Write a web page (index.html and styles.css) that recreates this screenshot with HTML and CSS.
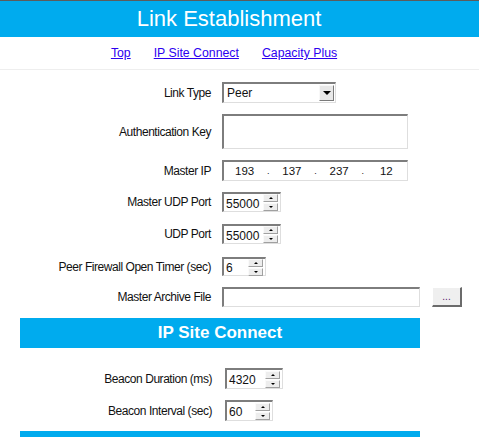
FILE: index.html
```html
<!DOCTYPE html>
<html lang="en">
<head>
    <meta charset="UTF-8">
    <title>Link Establishment</title>
    <link rel="stylesheet" href="styles.css">
</head>
<body>
    <div class="page-title">Link Establishment</div>

    <div class="nav-links">
        <a href="#top">Top</a>
        <a href="#ipsc">IP Site Connect</a>
        <a href="#cap">Capacity Plus</a>
    </div>

    <div class="form">
        <div class="row">
            <label class="lbl">Link Type</label>
            <div class="field select-box">
                <span class="select-text">Peer</span>
                <span class="drop-btn"><span class="tri-down"></span></span>
            </div>
        </div>
        <div class="row">
            <label class="lbl">Authentication Key</label>
            <div class="field auth-box"></div>
        </div>
        <div class="row">
            <label class="lbl">Master IP</label>
            <div class="field ip-box">
                <span class="octet">193</span><span class="dot">.</span>
                <span class="octet">137</span><span class="dot">.</span>
                <span class="octet">237</span><span class="dot">.</span>
                <span class="octet">12</span>
            </div>
        </div>
        <div class="row">
            <label class="lbl">Master UDP Port</label>
            <div class="field spin w59">
                <span class="spin-val">55000</span>
                <span class="spin-btns"><span class="sbtn"><span class="tri-up"></span></span><span class="sbtn"><span class="tri-dn"></span></span></span>
            </div>
        </div>
        <div class="row push1">
            <label class="lbl">UDP Port</label>
            <div class="field spin w59">
                <span class="spin-val">55000</span>
                <span class="spin-btns"><span class="sbtn"><span class="tri-up"></span></span><span class="sbtn"><span class="tri-dn"></span></span></span>
            </div>
        </div>
        <div class="row push2">
            <label class="lbl">Peer Firewall Open Timer (sec)</label>
            <div class="field spin w44 short">
                <span class="spin-val">6</span>
                <span class="spin-btns"><span class="sbtn"><span class="tri-up"></span></span><span class="sbtn"><span class="tri-dn"></span></span></span>
            </div>
        </div>
        <div class="row">
            <label class="lbl">Master Archive File</label>
            <div class="field file-box"></div>
            <button class="browse-btn">...</button>
        </div>
    </div>

    <div class="section-head" id="ipsc">IP Site Connect</div>

    <div class="form form-isc">
        <div class="row">
            <label class="lbl">Beacon Duration (ms)</label>
            <div class="field spin w58 tall">
                <span class="spin-val">4320</span>
                <span class="spin-btns"><span class="sbtn"><span class="tri-up"></span></span><span class="sbtn"><span class="tri-dn"></span></span></span>
            </div>
        </div>
        <div class="row">
            <label class="lbl">Beacon Interval (sec)</label>
            <div class="field spin w48 tall">
                <span class="spin-val">60</span>
                <span class="spin-btns"><span class="sbtn"><span class="tri-up"></span></span><span class="sbtn"><span class="tri-dn"></span></span></span>
            </div>
        </div>
    </div>

    <div class="section-bar"></div>
</body>
</html>
```

FILE: styles.css
```css
body {
    margin: 0;
    font-family: "Liberation Sans", Arial, sans-serif;
    background-color: #fff;
    color: #111;
}
.page-title {
    border-top: 1px solid #5c5c5c;
    background-color: #00abee;
    color: #fff;
    height: 36px;
    line-height: 36px;
    font-size: 22px;
    text-align: center;
    padding-right: 21px;
}
.nav-links {
    display: flex;
    justify-content: center;
    gap: 23px;
    height: 32px;
    align-items: center;
    padding-right: 31px;
    border-bottom: 1px solid #eeeeee;
    font-size: 12.3px;
}
.nav-links a {
    color: #2c00f0;
}
.form {
    display: flex;
    flex-direction: column;
    gap: 11px;
    padding-top: 12px;
}
.row {
    display: flex;
    align-items: center;
}
.push1 { margin-top: 1px; }
.push2 { margin-top: 2px; }
.lbl {
    width: 211px;
    margin-right: 11px;
    text-align: right;
    font-size: 12px;
    letter-spacing: -0.45px;
}
.field {
    box-sizing: border-box;
    background-color: #fff;
    border-top: 2px solid #7d7d7d;
    border-left: 2px solid #7d7d7d;
    border-right: 1px solid #dedede;
    border-bottom: 1px solid #dedede;
    font-size: 12px;
}
.select-box {
    width: 114px;
    height: 21px;
    display: flex;
    align-items: center;
    justify-content: space-between;
    padding-left: 3px;
    padding-right: 1px;
}
.drop-btn {
    width: 15px;
    height: 16px;
    background-color: #e8e8e8;
    border-top: 1px solid #f8f8f8;
    border-left: 1px solid #f8f8f8;
    border-right: 1px solid #7a7a7a;
    border-bottom: 1px solid #7a7a7a;
    box-sizing: border-box;
    display: flex;
    align-items: center;
    justify-content: center;
}
.tri-down {
    width: 0;
    height: 0;
    border-left: 4px solid transparent;
    border-right: 4px solid transparent;
    border-top: 4px solid #000;
}
.auth-box {
    width: 186px;
    height: 35px;
}
.ip-box {
    width: 186px;
    height: 21px;
    display: flex;
    align-items: center;
    font-size: 11.5px;
}
.octet {
    flex: 1;
    text-align: center;
}
.dot {
    width: 6px;
    text-align: center;
    font-size: 9px;
}
.spin {
    height: 20px;
    display: flex;
    align-items: center;
    justify-content: space-between;
    padding-left: 2px;
    padding-right: 2px;
}
.spin.short { height: 19px; }
.spin.tall { height: 21px; }
.w59 { width: 59px; }
.w44 { width: 44px; }
.w58 { width: 58px; }
.w48 { width: 48px; }
.spin-val {
    padding-top: 2px;
}
.spin-btns {
    display: flex;
    flex-direction: column;
    gap: 1px;
}
.sbtn {
    box-sizing: border-box;
    width: 15px;
    height: 8px;
    background-color: #ededed;
    border: 1px solid #a0a0a0;
    border-top-color: #fafafa;
    border-left-color: #fafafa;
    display: flex;
    align-items: center;
    justify-content: center;
}
.tri-up {
    width: 0;
    height: 0;
    border-left: 2px solid transparent;
    border-right: 2px solid transparent;
    border-bottom: 2px solid #000;
}
.tri-dn {
    width: 0;
    height: 0;
    border-left: 2px solid transparent;
    border-right: 2px solid transparent;
    border-top: 2px solid #000;
}
.file-box {
    width: 198px;
    height: 20px;
}
.browse-btn {
    margin-left: 12px;
    width: 30px;
    height: 20px;
    box-sizing: border-box;
    background-color: #efefef;
    border: none;
    border-top: 1px solid #fff;
    border-left: 1px solid #fff;
    border-right: 2px solid #6b6b6b;
    border-bottom: 2px solid #6b6b6b;
    font-family: "Liberation Sans", Arial, sans-serif;
    font-size: 10px;
    color: #5a1a6a;
    padding: 0;
}
.section-head {
    margin: 11px 0 0 20px;
    width: 400px;
    height: 30px;
    line-height: 30px;
    background-color: #00abee;
    color: #fff;
    font-weight: bold;
    font-size: 17px;
    text-align: center;
}
.form-isc {
    padding-top: 20px;
}
.form-isc .lbl {
    width: 212px;
    margin-right: 13px;
}
.section-bar {
    margin: 10px 0 0 20px;
    width: 400px;
    height: 8px;
    background-color: #00abee;
}
```
